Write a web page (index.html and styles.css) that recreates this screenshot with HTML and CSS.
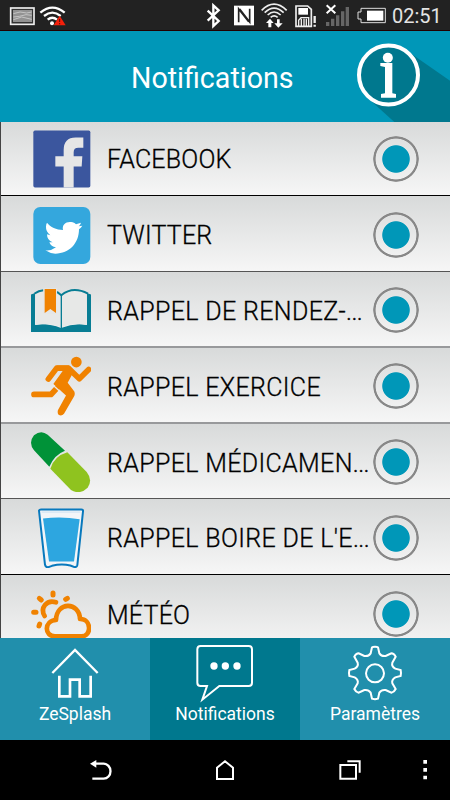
FILE: index.html
```html
<!DOCTYPE html>
<html lang="fr">
<head>
<meta charset="utf-8">
<title>Notifications</title>
<link rel="stylesheet" href="styles.css">
</head>
<body>
<div class="screen">
  <div class="status">
    <svg class="status-left" viewBox="0 0 210 90">
      <rect x="32" y="24" width="70" height="49" fill="#333" stroke="#eee" stroke-width="5"/>
      <rect x="39" y="30" width="57" height="36" fill="#929292"/>
      <path d="M40 41l20-5 20 3 15-3M40 51l18-2 20-5 17 2M40 59l25-8 30 7" fill="none" stroke="#c4c4c4" stroke-width="3"/>
      <path d="M121 38Q157 8 194 38M132 48Q157 28 182 48M143 59Q157 47 171 59" fill="none" stroke="#fff" stroke-width="7"/>
      <circle cx="156" cy="70" r="6" fill="#fff"/>
      <path d="M179 47L197 76H161Z" fill="#f5200b"/>
      <path d="M179 57v9M179 69v4" stroke="#551008" stroke-width="3"/>
    </svg>
    <svg class="status-right" viewBox="39 0 552 90">
      <path d="M53 32L86 63 70 78V16L86 31 53 62" fill="none" stroke="#fff" stroke-width="7"/>
      <rect x="132" y="17" width="60" height="59" fill="#fff"/>
      <path d="M146 67V27L176 65M149 27L179 66V26" fill="none" stroke="#222" stroke-width="5"/>
      <path d="M215 31Q252-6 290 31M224 38Q252 11 281 38M233 45Q252 27 272 45M242 52Q252 43 263 52" fill="none" stroke="#eee" stroke-width="5"/>
      <path d="M240 56l11 13h-7v13h-9V69h-7ZM265 83l-12-13h8V58h8v12h9Z" fill="#fff"/>
      <path d="M318 18H353L364 28V79H318Z" fill="none" stroke="#eee" stroke-width="5"/>
      <rect x="325" y="24" width="29" height="20" fill="#fff"/>
      <path d="M326 78V61L333 53H356V78M334 78V56M342 78V56M349 78V56" fill="none" stroke="#eee" stroke-width="4"/>
      <path d="M374 48V69M374 74v6" stroke="#eee" stroke-width="7"/>
      <path d="M408 66h10v12h-10ZM423 56h10v22h-10ZM438 46h10v32h-10ZM453 34h10v44h-10ZM467 21h10v57h-10Z" fill="#666"/>
      <path d="M410 16L436 40M436 16L410 40" stroke="#fff" stroke-width="6"/>
      <path d="M513 25H586V68H513V57H504V36H513Z" fill="none" stroke="#ddd" stroke-width="3"/>
      <rect x="531" y="32" width="49" height="30" fill="#fff"/>
    </svg>
    <span class="clock">02:51</span>
  </div>

  <header class="header">
    <h1 class="title">Notifications</h1>
    <svg class="info" viewBox="0 3 360 273">
      <path d="M236 66L360 152V276H193L110 201Z" fill="#00788e"/>
      <circle cx="175.500" cy="135" r="88.500" fill="#00788e" stroke="#fff" stroke-width="12"/>
      <circle cx="173.500" cy="83" r="15" fill="#fff"/>
      <path d="M151 99H187V190L198 192V203H153V192L165 190V111L151 108Z" fill="#fff"/>
    </svg>
  </header>

  <main class="list">
    <div class="row row-first line-black">
      <svg class="icon" viewBox="93 40.500 180 180">
        <rect x="100" y="45" width="171" height="171" rx="5" fill="#3b569e"/>
        <path d="M191 216V153H166V122H191V104Q191 66 227 66H250V97H235Q221 97 221 110V122H247L245 153H221V216Z" fill="#e6e6e6"/>
      </svg>
      <span class="label">FACEBOOK</span><span class="radio"></span>
    </div>
    <div class="row line-dark">
      <svg class="icon" viewBox="93 268 180 180">
        <rect x="100" y="274" width="171" height="171" rx="21" fill="#34a7dd"/>
        <path d="M141 321C151 334 169 342 189 343C185 325 201 315 218 320Q224 322 228 326L243 321Q241 328 236 332L247 330Q243 336 237 341C237 383 208 414 166 414Q149 413 136 404Q154 406 168 395Q153 393 148 380H158Q141 374 141 356L151 359Q137 347 138 333Q138 326 141 321Z" fill="#fff"/>
      </svg>
      <span class="label">TWITTER</span><span class="radio"></span>
    </div>
    <div class="row line-thick">
      <svg class="icon" viewBox="93 30.300 180 180">
        <path d="M93 74L105 69V165Q143 159 183 174Q222 159 261 165V69L273 74V186H93Z" fill="#087d94"/>
        <path d="M108 71Q146 51 182 76V171Q148 157 108 165ZM186 76Q222 51 259 71V165Q220 157 186 171Z" fill="#e7e8e7"/>
        <path d="M104 71Q116 62 130 61M171 66L184 76Q218 47 264 71" fill="none" stroke="#087d94" stroke-width="6"/>
        <path d="M184 75V174" stroke="#087d94" stroke-width="4"/>
        <path d="M130 55H171V132H130Z" fill="#e5e6e5"/>
        <path d="M134 57H168V129L151 117 134 129Z" fill="#f08200"/>
      </svg>
      <span class="label wide">RAPPEL DE RENDEZ-<span class="dots">...</span></span><span class="radio"></span>
    </div>
    <div class="row line-thick">
      <svg class="icon" viewBox="93 257.700 180 180">
        <circle cx="229" cy="276" r="16" fill="#f08200"/>
        <path d="M102 373H153L169 356M145 327L170 294H205L238 326L266 298" fill="none" stroke="#f08200" stroke-width="17" stroke-linecap="round" stroke-linejoin="round"/>
        <path d="M170 286H207L222 303 203 338 223 364Q226 372 222 379L192 431Q186 438 177 435Q171 430 174 420L198 376 160 342 188 303H170Z" fill="#f08200"/>
        <path d="M157 343L180 364" stroke="#ebebeb" stroke-width="4"/>
      </svg>
      <span class="label wide">RAPPEL EXERCICE</span><span class="radio"></span>
    </div>
    <div class="row line-dark">
      <svg class="icon" viewBox="93 35 180 180">
        <path d="M102 45Q123 27 143 43L195 91Q163 103 148 139L102 90Q84 67 102 45Z" fill="#009238"/>
        <path d="M202 96L260 155Q279 178 263 202Q239 225 213 209L151 145Q163 107 202 96Z" fill="#8fc31f"/>
      </svg>
      <span class="label wide">RAPPEL MÉDICAMEN<span class="dots">...</span></span><span class="radio"></span>
    </div>
    <div class="row line-black">
      <svg class="icon" viewBox="93 262.500 180 180">
        <path d="M117 270Q118 267 123 267H244Q250 267 249 273L232 434Q231 440 224 440L211 435Q184 428 156 436L145 440Q137 441 135 433Z" fill="#f2f5f8" stroke="#0879bd" stroke-width="6"/>
        <path d="M129 294Q184 287 239 296L222 423H147Z" fill="#2da6e0"/>
        <path d="M125 275H241" stroke="#dceaf5" stroke-width="5"/>
      </svg>
      <span class="label wide">RAPPEL BOIRE DE L'E<span class="dots">...</span></span><span class="radio"></span>
    </div>
    <div class="row">
      <svg class="icon" viewBox="93 40 180 180">
        <g fill="none" stroke="#f08200" stroke-linecap="round">
          <path d="M159 67V73M118 83L124 88M202 83L197 86M101 125H108M117 166L119 160" stroke-width="15"/>
          <path d="M134 136C119 112 140 86 168 95" stroke-width="14"/>
          <path d="M165 197C132 197 132 150 168 148C169 92 238 92 240 145C274 144 277 197 244 197Z" stroke-width="14" stroke-linejoin="round"/>
        </g>
      </svg>
      <span class="label">MÉTÉO</span><span class="radio"></span>
    </div>
  </main>

  <nav class="tabs">
    <div class="tab">
      <svg class="tab-icon" viewBox="135 9 180 180" fill="none" stroke="#fff" stroke-width="7">
        <path d="M157 114L225 45 293 114"/>
        <path d="M178 122V184H210V134H239V184H272V122" stroke-width="8"/>
      </svg>
      <span>ZeSplash</span>
    </div>
    <div class="tab tab-active">
      <svg class="tab-icon" viewBox="585 9 180 180" overflow="visible">
        <path d="M602 33H746Q756 33 756 43V143Q756 153 746 153H658L607 194 621 153H602Q592 153 592 143V43Q592 33 602 33Z" fill="none" stroke="#fff" stroke-width="6"/>
        <circle cx="642" cy="93" r="11" fill="#fff"/><circle cx="676" cy="93" r="11" fill="#fff"/><circle cx="711" cy="93" r="11" fill="#fff"/>
      </svg>
      <span>Notifications</span>
    </div>
    <div class="tab">
      <svg class="tab-icon" viewBox="585 24 180 180" overflow="visible" fill="none" stroke="#fff" stroke-width="6">
        <path d="M666 52Q668 50 675 50T684 52L688 70Q695 80 707 78L724 70Q732 70 737 80L727 98Q724 109 736 116L752 120Q754 129 752 138L736 142Q724 149 727 160L737 177Q733 186 724 188L707 180Q695 178 688 188L684 206Q675 209 666 206L662 188Q655 178 643 180L626 188Q617 186 613 177L623 160Q626 149 614 142L598 138Q596 129 598 120L614 116Q626 109 623 98L613 80Q618 70 626 70L643 78Q655 80 662 70Z"/>
        <circle cx="675" cy="130" r="27"/>
      </svg>
      <span>Paramètres</span>
    </div>
  </nav>

  <div class="sysnav">
    <svg class="sys" viewBox="255 360 90 90"><path d="M287 386H311A20 22 0 0 1 311 431H277" fill="none" stroke="#fff" stroke-width="7"/><path d="M270 386L289 375V398Z" fill="#fff"/></svg>
    <svg class="sys" viewBox="630 360 90 90"><path d="M651 432V398L675 379 699 398V432Z" fill="none" stroke="#fff" stroke-width="6"/></svg>
    <svg class="sys" viewBox="555 375 90 90"><path d="M571 405H618V446H571ZM592 394H629V428" fill="none" stroke="#fff" stroke-width="6"/></svg>
    <svg class="sys sys-menu" viewBox="810 375 30 90"><path d="M820 390h11v11h-11ZM820 414h11v11h-11ZM820 437h11v11h-11Z" fill="#fff"/></svg>
  </div>
</div>
</body>
</html>
```
FILE: styles.css
```css
* { box-sizing: border-box; }
body { margin: 0; font-family: Roboto, "Liberation Sans", sans-serif; background: #000; }
.screen { width: 450px; height: 800px; display: flex; flex-direction: column; overflow: hidden; }
.screen svg { display: block; flex: none; }

.status { height: 31px; flex: none; display: flex; align-items: flex-start; background: #222; border-bottom: 1px solid #200; }
.status-left { width: 70px; height: 30px; }
.status-right { width: 184px; height: 30px; margin-left: 133px; }
.clock { margin-left: 5px; font-size: 20px; line-height: 32px; color: #e4e4e4; white-space: nowrap; }

.header { height: 91px; flex: none; display: flex; justify-content: flex-end; align-items: center; background: #0097b8; }
.title { flex: 1; margin: 2px 0 0; padding-left: 131px; font-size: 28.6px; font-weight: 400; line-height: 34px; color: #fff; white-space: nowrap; }
.info { width: 120px; height: 91px; }

.list { height: 516px; flex: none; overflow: hidden; border-left: 1px solid #444; }
.row { height: 76px; display: flex; align-items: center; padding: 2px 31px 0 30px; background: linear-gradient(#d8dada, #f6f6f6); }
.row-first { height: 74px; padding-top: 0; }
.row:nth-child(5) { height: 75px; }
.line-black { border-bottom: 1px solid #000; }
.line-dark { border-bottom: 1px solid #555; }
.line-thick { border-bottom: 2px solid #98999b; }
.icon { width: 60px; height: 60px; }
.label { flex: 1; min-width: 0; margin-left: 16px; padding-top: 3px; font-size: 25px; font-weight: 300; line-height: 30px; letter-spacing: 0.2px; color: #000; -webkit-text-stroke: 0.3px #000; white-space: nowrap; }
.wide { letter-spacing: 0.35px; }
.dots { letter-spacing: -0.6px; }
.radio { width: 46px; height: 46px; flex: none; border-radius: 50%; background: radial-gradient(circle, #0097b8 13.3px, transparent 14.2px, transparent 20px, #888 20.8px, #888 22.4px, transparent 23.2px); }

.tabs { height: 102px; flex: none; display: grid; grid-template-columns: repeat(3, 1fr); }
.tab { display: flex; flex-direction: column; align-items: center; background: #218fac; color: #fff; font-size: 17.5px; line-height: 26px; }
.tab-active { background: #00788e; }
.tab-icon { width: 60px; height: 60px; }
.tab span { margin-top: 3px; }

.sysnav { height: 60px; display: flex; align-items: center; padding-left: 85px; background: #000; }
.sys { width: 30px; height: 30px; margin-right: 95px; }
.sys-menu { width: 10px; margin: 0 0 0 -40px; }
```
